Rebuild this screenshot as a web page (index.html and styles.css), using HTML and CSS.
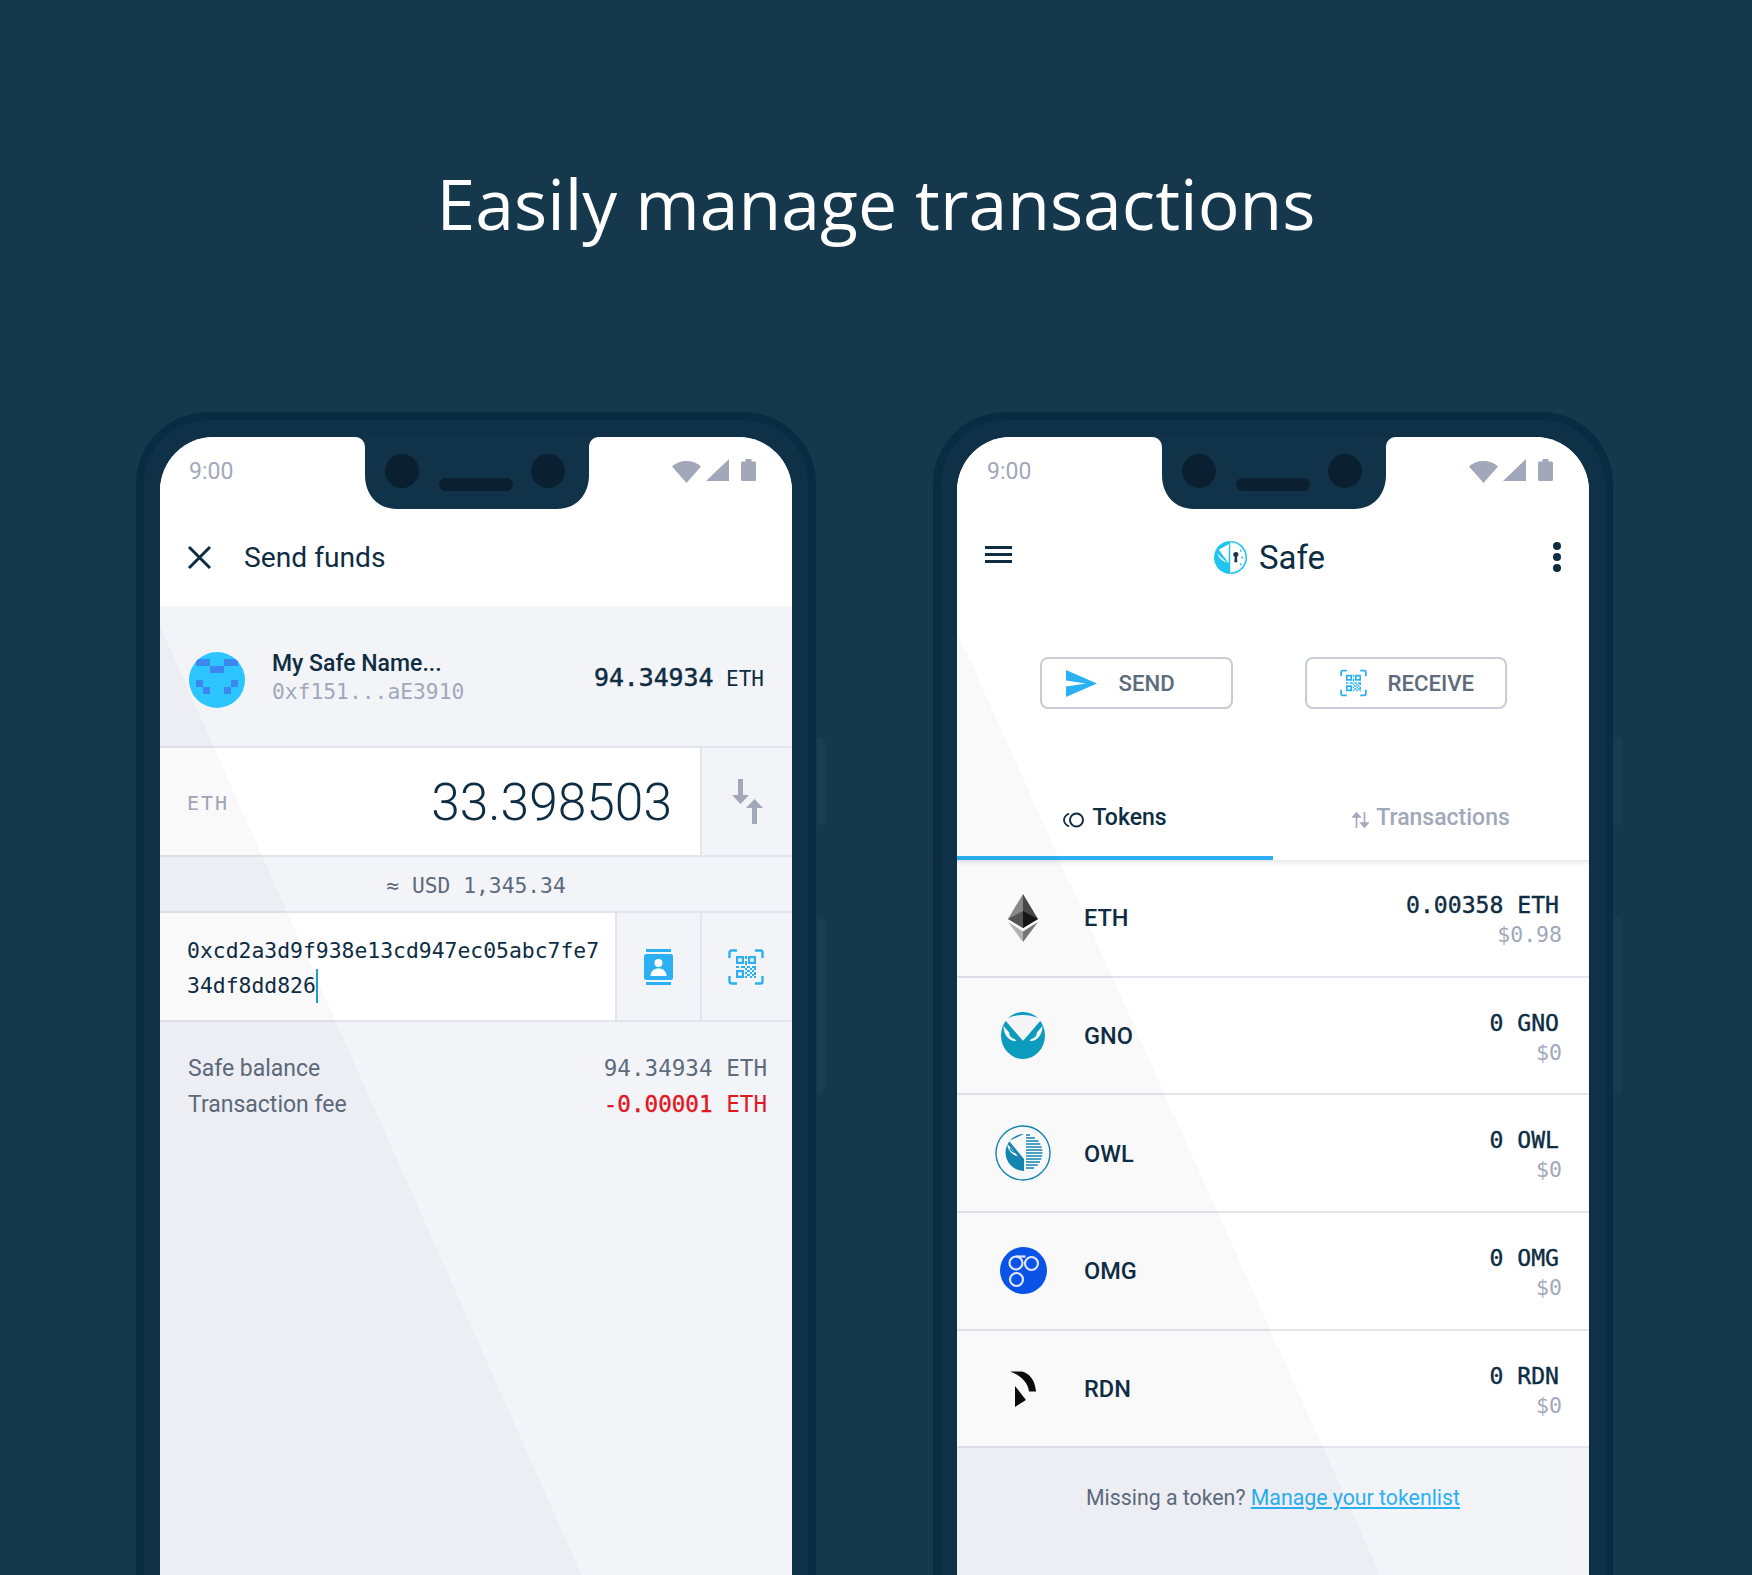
FILE: index.html
```html
<!DOCTYPE html>
<html lang="en">
<head>
    <meta charset="UTF-8">
    <meta name="viewport" content="width=device-width, initial-scale=1.0">
    <title>Easily manage transactions</title>
    <link rel="stylesheet" href="styles.css">
</head>
<body>
    <svg class="defs" width="0" height="0" aria-hidden="true">
        <defs>
            <symbol id="qr" viewBox="0 0 36 36">
                <path d="M1.500 9V3.500a2 2 0 0 1 2-2H9M27 1.500h5.500a2 2 0 0 1 2 2V9M34.500 27v5.500a2 2 0 0 1-2 2H27M9 34.500H3.500a2 2 0 0 1-2-2V27" fill="none" stroke="currentColor" stroke-width="2.400"/>
                <path d="M8 7h8v8H8zM10.200 9.200v3.600h3.600V9.200zM20 7h8v8h-8zM22.200 9.200v3.600h3.600V9.200zM8 21h8v8H8zM10.200 23.200v3.600h3.600v-3.600z" fill="currentColor" fill-rule="evenodd"/>
                <path d="M17 7h2v3h-2zM17 12h2v4h-2zM8 17h3v2H8zM13 17h4v2h-4zM19 17h3v2h-3zM24 17h4v2h-4zM17 19h2v2h-2zM22 19h2v2h-2zM26 19h2v2h-2zM19 21h3v2h-3zM24 21h2v2h-2zM17 23h2v2h-2zM22 23h2v2h-2zM26 23h2v3h-2zM19 25h3v2h-3zM24 25h2v2h-2zM17 27h2v2h-2zM22 27h2v2h-2zM26 27h2v2h-2z" fill="currentColor"/>
            </symbol>
            <symbol id="wifi" viewBox="0 0 29 22">
                <path d="M0 5.500C3.500 2 8.500 0 14.500 0S25.500 2 29 5.500L14.500 22z" fill="currentColor"/>
            </symbol>
            <symbol id="signal" viewBox="0 0 23 22">
                <path d="M23 0v22H0z" fill="currentColor"/>
            </symbol>
            <symbol id="battery" viewBox="0 0 15 22">
                <path d="M4.500 0h6v2.500h3a1.500 1.500 0 0 1 1.500 1.500v16.500a1.500 1.500 0 0 1-1.500 1.500h-12A1.500 1.500 0 0 1 0 20.500V4a1.500 1.500 0 0 1 1.500-1.500h3z" fill="currentColor"/>
            </symbol>
            <symbol id="notch" viewBox="0 0 244 72">
                <path d="M0 0h244c-6 0-10 4-10 11v27c0 20-13 34-32 34H42C23 72 10 58 10 38V11C10 4 6 0 0 0z" fill="currentColor"/>
            </symbol>
        </defs>
    </svg>

    <h1 class="title">Easily manage transactions</h1>

    <div class="phones">
        <!-- send funds -->
        <div class="phone">
            <span class="side-btn side-btn-short"></span>
            <span class="side-btn side-btn-long"></span>
            <div class="screen screen-send">
                <div class="notch">
                    <svg class="notch-shape"><use href="#notch"/></svg>
                    <span class="camera camera-left"></span>
                    <span class="speaker"></span>
                    <span class="camera camera-right"></span>
                </div>
                <div class="status">
                    <span class="clock">9:00</span>
                    <div class="status-icons">
                        <svg class="icon-wifi"><use href="#wifi"/></svg>
                        <svg class="icon-signal"><use href="#signal"/></svg>
                        <svg class="icon-battery"><use href="#battery"/></svg>
                    </div>
                </div>
                <div class="toolbar toolbar-send">
                    <svg class="icon-close" viewBox="0 0 25 25"><path d="M2 2l21 21M23 2L2 23" fill="none" stroke="currentColor" stroke-width="3"/></svg>
                    <span class="toolbar-title">Send funds</span>
                </div>

                <div class="safe-row">
                    <svg class="avatar" viewBox="0 0 56 56">
                        <rect width="56" height="56" fill="#2cc5ff"/>
                        <path d="M7 7h14v7H7zM35 7h14v7H35zM21 14h14v7H21zM7 28h7v7H7zM42 28h7v7h-7zM14 35h7v7h-7zM35 35h7v7h-7z" fill="#3c86f0"/>
                    </svg>
                    <div class="safe-info">
                        <div class="safe-name">My Safe Name...</div>
                        <div class="safe-address">0xf151...aE3910</div>
                    </div>
                    <div class="safe-balance"><strong>94.34934</strong> <span>ETH</span></div>
                </div>

                <div class="amount-row">
                    <div class="amount-field">
                        <span class="amount-unit">ETH</span>
                        <span class="amount-value">33.398503</span>
                    </div>
                    <div class="cell cell-swap">
                        <svg class="icon-swap" viewBox="0 0 31 45"><path d="M0 16l8.500 9 8.500-9zM14 29l8.500-9 8.500 9z" fill="currentColor"/><path d="M8.500 0v18M22.500 45V26" stroke="currentColor" stroke-width="5" fill="none"/></svg>
                    </div>
                </div>

                <div class="fiat-row">≈ USD 1,345.34</div>

                <div class="address-row">
                    <div class="address-field">0xcd2a3d9f938e13cd947ec05abc7fe7<br>34df8dd826<span class="caret"></span></div>
                    <div class="cell cell-contact">
                        <svg class="icon-contact" viewBox="0 0 29 36">
                            <path d="M2 0h25v3H2zM2 33h25v3H2z" fill="#2ab0f3"/>
                            <path d="M2.500 5h24A2.500 2.500 0 0 1 29 7.500v21a2.500 2.500 0 0 1-2.500 2.500h-24A2.500 2.500 0 0 1 0 28.500v-21A2.500 2.500 0 0 1 2.500 5z" fill="#2ab0f3"/>
                            <circle cx="14.500" cy="14" r="4" fill="#fff"/>
                            <path d="M6.500 27c0-5 3.500-7.500 8-7.500s8 2.500 8 7.500z" fill="#fff"/>
                        </svg>
                    </div>
                    <div class="cell cell-qr">
                        <svg class="icon-qr-lg"><use href="#qr"/></svg>
                    </div>
                </div>

                <div class="fees">
                    <div class="fee-row">
                        <span>Safe balance</span>
                        <span class="fee-value">94.34934 <span class="fee-unit">ETH</span></span>
                    </div>
                    <div class="fee-row">
                        <span>Transaction fee</span>
                        <span class="fee-value fee-negative"><strong>-0.00001</strong> <span class="fee-unit">ETH</span></span>
                    </div>
                </div>
            </div>
        </div>

        <!-- token list -->
        <div class="phone">
            <span class="side-btn side-btn-short"></span>
            <span class="side-btn side-btn-long"></span>
            <div class="screen screen-tokens">
                <div class="notch">
                    <svg class="notch-shape"><use href="#notch"/></svg>
                    <span class="camera camera-left"></span>
                    <span class="speaker"></span>
                    <span class="camera camera-right"></span>
                </div>
                <div class="status">
                    <span class="clock">9:00</span>
                    <div class="status-icons">
                        <svg class="icon-wifi"><use href="#wifi"/></svg>
                        <svg class="icon-signal"><use href="#signal"/></svg>
                        <svg class="icon-battery"><use href="#battery"/></svg>
                    </div>
                </div>
                <div class="toolbar toolbar-home">
                    <div class="menu"><span></span><span></span><span></span></div>
                    <div class="brand">
                        <svg class="brand-logo" viewBox="0 0 34 34">
                            <path d="M17 0v34A17 17 0 0 1 17 0z" fill="#1fc4ef"/>
                            <path d="M15.500 3L5 9l10 14z" fill="#fff"/>
                            <path d="M3.500 13c1 4 5 8 10 9.500L3.500 13z" fill="#fff"/>
                            <path d="M6.500 13.500c1 2.500 3 4.500 5.500 5.500" stroke="#1fc4ef" stroke-width="1.400" fill="none"/>
                            <path d="M17 .8a16.200 16.200 0 0 1 0 32.400" fill="#fff" stroke="#1fc4ef" stroke-width="1.600"/>
                            <circle cx="22.500" cy="14" r="2.600" fill="#12344b"/>
                            <path d="M21.500 15h2l.6 7h-3.200z" fill="#12344b"/>
                            <circle cx="29" cy="17" r="1" fill="#1fc4ef"/>
                            <circle cx="27.500" cy="10" r="1" fill="#1fc4ef"/>
                            <circle cx="27.500" cy="24" r="1" fill="#1fc4ef"/>
                        </svg>
                        <span class="brand-name">Safe</span>
                    </div>
                    <div class="more"><span></span><span></span><span></span></div>
                </div>

                <div class="actions">
                    <div class="action action-send">
                        <svg class="icon-send" viewBox="0 0 31 27"><path d="M0 0l31 13.500L0 27V16.500l20-3-20-3z" fill="#2ab0f3"/></svg>
                        <span>SEND</span>
                    </div>
                    <div class="action action-receive">
                        <svg class="icon-qr-sm"><use href="#qr"/></svg>
                        <span>RECEIVE</span>
                    </div>
                </div>

                <div class="tabs">
                    <div class="tab tab-active">
                        <svg class="icon-coins" viewBox="0 0 22 16"><circle cx="13.500" cy="8" r="6.500" fill="none" stroke="currentColor" stroke-width="2"/><path d="M6 1.500C3 3 1 5 1 8s2 5 5 6.500" fill="none" stroke="currentColor" stroke-width="1.800"/></svg>
                        <span>Tokens</span>
                    </div>
                    <div class="tab">
                        <svg class="icon-arrows" viewBox="0 0 17 16"><path d="M4.500 16V4M1 5l3.500-4L8 5zM12.500 0v12M9 11l3.500 4 3.500-4z" fill="currentColor" stroke="currentColor" stroke-width="1.600"/></svg>
                        <span>Transactions</span>
                    </div>
                </div>

                <ul class="tokens">
                    <li class="token">
                        <div class="token-icon">
                            <svg class="logo-eth" viewBox="0 0 30 48">
                                <path d="M15 0L0 25l15 9z" fill="#8a8a8a"/>
                                <path d="M15 0l15 25-15 9z" fill="#4a4a4a"/>
                                <path d="M15 17L0 25l15 9z" fill="#555"/>
                                <path d="M15 17l15 8-15 9z" fill="#161616"/>
                                <path d="M0 28l15 20V37.500z" fill="#b5b5b5"/>
                                <path d="M30 28L15 48V37.500z" fill="#777"/>
                            </svg>
                        </div>
                        <span class="token-name">ETH</span>
                        <div class="token-value"><div class="token-amount">0.00358 ETH</div><div class="token-fiat">$0.98</div></div>
                    </li>
                    <li class="token">
                        <div class="token-icon">
                            <svg class="logo-gno" viewBox="0 0 44 47">
                                <ellipse cx="22" cy="23.500" rx="22" ry="23.500" fill="#0c9fc0"/>
                                <path d="M4 8C9 4.500 15 3 22 3s13 1.500 18 5L22 29z" fill="#fbfbfc"/>
                                <path d="M2.500 14l13 15c-7 1-13-6-13-15zM41.500 14l-13 15c7 1 13-6 13-15z" fill="#fff"/>
                                <path d="M4 10.500L22 30.500l18-20" fill="none" stroke="#0c9fc0" stroke-width="1.500"/>
                                <path d="M8 20.500l6.500 6.500c-3.500 0-6.500-3-6.500-6.500zM36 20.500L29.500 27c3.500 0 6.500-3 6.500-6.500z" fill="#0c9fc0"/>
                            </svg>
                        </div>
                        <span class="token-name">GNO</span>
                        <div class="token-value"><div class="token-amount">0 GNO</div><div class="token-fiat">$0</div></div>
                    </li>
                    <li class="token">
                        <div class="token-icon">
                            <svg class="logo-owl" viewBox="0 0 56 56">
                                <circle cx="28" cy="28" r="27" fill="#fff" stroke="#1487b4" stroke-width="1.400"/>
                                <path d="M29 9v37A18.500 18.500 0 0 1 29 9z" fill="#1487b4"/>
                                <path d="M29 9L14 16l15 18z" fill="#fff"/>
                                <path d="M12.500 21c1 5 5 9 10.500 10.500L12.500 19z" fill="#fff"/>
                                <path d="M15 23.500c1 2 3 3.500 4.500 4" stroke="#1487b4" stroke-width="1.600" fill="none"/>
                                <path d="M31 10h4M31 13h9M31 16h12.500M31 19h14.400M31 22h15.700M31 25h16.300M31 28h16.500M31 31h16.200M31 34h15.300M31 37h14M31 40h11.700M31 43h8" stroke="#1487b4" stroke-width="1.600"/>
                            </svg>
                        </div>
                        <span class="token-name">OWL</span>
                        <div class="token-value"><div class="token-amount">0 OWL</div><div class="token-fiat">$0</div></div>
                    </li>
                    <li class="token">
                        <div class="token-icon">
                            <svg class="logo-omg" viewBox="0 0 47 47">
                                <circle cx="23.500" cy="23.500" r="23.500" fill="#0a55ee"/>
                                <g fill="none" stroke="#e6edfb" stroke-width="2.200">
                                    <circle cx="31.500" cy="16.500" r="6.500"/>
                                    <circle cx="16" cy="16" r="6.500"/>
                                    <circle cx="16.500" cy="32.500" r="6.500"/>
                                    <path d="M16 9.500h9.500"/>
                                </g>
                            </svg>
                        </div>
                        <span class="token-name">OMG</span>
                        <div class="token-value"><div class="token-amount">0 OMG</div><div class="token-fiat">$0</div></div>
                    </li>
                    <li class="token">
                        <div class="token-icon">
                            <svg class="logo-rdn" viewBox="0 0 26 36">
                                <path d="M0 .500h12c8 2 13 9 14 20h-7C18 11 10 4 0 .500z" fill="#0b0b0b"/>
                                <path d="M5 15l11 14-11 7z" fill="#0b0b0b"/>
                            </svg>
                        </div>
                        <span class="token-name">RDN</span>
                        <div class="token-value"><div class="token-amount">0 RDN</div><div class="token-fiat">$0</div></div>
                    </li>
                </ul>

                <p class="tokenlist-note">Missing a token? <a href="#">Manage your tokenlist</a></p>
            </div>
        </div>
    </div>
</body>
</html>
```

FILE: styles.css
```css
* {
    box-sizing: border-box;
}

html, body {
    margin: 0;
    height: 1575px;
    overflow: hidden;
}

body {
    background-color: #16384d;
    font-family: Roboto, Arial, sans-serif;
    color: #0e2d43;
}

.defs {
    display: block;
    height: 0;
}

.title {
    margin: 0;
    height: 412px;
    padding-top: 155px;
    font-family: "Open Sans", sans-serif;
    font-size: 69.700px;
    font-weight: 400;
    line-height: 96px;
    text-align: center;
    color: #ffffff;
}

.phones {
    display: flex;
    gap: 117px;
    padding-left: 136px;
}

.phone {
    position: relative;
    width: 680px;
    padding: 25px 24px 0;
    border-radius: 72px 72px 0 0;
    background-color: #0a2c42;
}

/* lighter band between the outer ring and the screen */
.phone::before {
    content: "";
    position: absolute;
    inset: 8px 8px 0;
    border-radius: 64px 64px 0 0;
    background-color: #0f3148;
}

.side-btn {
    position: absolute;
    right: -9px;
    width: 8px;
    border-radius: 0 3px 3px 0;
    background-color: #1b3d53;
}

.side-btn-short {
    top: 326px;
    height: 87px;
}

.side-btn-long {
    top: 505px;
    height: 176px;
}

.screen {
    position: relative;
    width: 632px;
    height: 1200px;
    overflow: hidden;
    border-radius: 54px 54px 0 0;
    background-color: #f3f4f8;
}

.screen::after {
    content: "";
    position: absolute;
    inset: 0;
    background-color: rgba(20, 40, 80, 0.026);
    pointer-events: none;
}

.screen-send::after {
    clip-path: polygon(0 189px, 449px 1200px, 0 1200px);
}

.screen-tokens::after {
    clip-path: polygon(0 194px, 451px 1200px, 0 1200px);
}

/* notch */
.notch {
    position: absolute;
    top: 0;
    left: 195px;
    width: 244px;
    height: 72px;
    color: #11334a;
}

.notch-shape {
    position: absolute;
    inset: 0;
    width: 244px;
    height: 72px;
}

.camera {
    position: absolute;
    top: 17px;
    width: 34px;
    height: 34px;
    border-radius: 50%;
    background-color: #0a1f30;
}

.camera-left {
    left: 30px;
}

.camera-right {
    left: 176px;
}

.speaker {
    position: absolute;
    top: 41px;
    left: 84px;
    width: 74px;
    height: 13px;
    border-radius: 7px;
    background-color: #0a1f30;
}

/* status bar */
.status {
    display: flex;
    align-items: center;
    justify-content: space-between;
    height: 71px;
    padding: 0 36px 1px 29px;
    background-color: #ffffff;
    color: #a2a8ba;
}

.screen-tokens .status {
    padding-left: 30px;
}

.clock {
    font-size: 23px;
    margin-top: -1px;
}

.status-icons {
    display: flex;
    align-items: flex-end;
    gap: 5px;
    margin-top: -4px;
}

.icon-wifi {
    width: 29px;
    height: 22px;
    margin-bottom: -2px;
}

.icon-signal {
    width: 23px;
    height: 22px;
}

.icon-battery {
    width: 15px;
    height: 22px;
    margin-left: 7px;
}

/* toolbars */
.toolbar {
    display: flex;
    align-items: center;
    height: 98px;
    background-color: #ffffff;
}

.toolbar-send {
    padding-left: 27px;
}

.icon-close {
    width: 25px;
    height: 25px;
    color: #0e2d43;
}

.toolbar-title {
    margin-left: 32px;
    font-size: 28.200px;
}

.toolbar-home {
    justify-content: space-between;
    padding: 0 28px;
}

.menu {
    display: flex;
    flex-direction: column;
    gap: 4px;
    width: 27px;
    margin-top: -5px;
}

.menu span {
    height: 3px;
    background-color: #0e2d43;
}

.brand {
    display: flex;
    align-items: center;
    gap: 12px;
    margin-left: -26px;
}

.brand-logo {
    width: 33px;
    height: 33px;
}

.brand-name {
    font-size: 33px;
}

.more {
    display: flex;
    flex-direction: column;
    gap: 3px;
    width: 8px;
}

.more span {
    height: 8px;
    border-radius: 50%;
    background-color: #0e2d43;
}

/* left screen */
.safe-row {
    display: flex;
    align-items: center;
    height: 142px;
    padding: 2px 28px 0 29px;
    border-bottom: 2px solid #e3e5ec;
}

.avatar {
    width: 56px;
    height: 56px;
    margin-top: 6px;
    border-radius: 50%;
}

.safe-info {
    flex: 1;
    margin-left: 27px;
}

.safe-name {
    font-size: 23px;
    font-weight: 500;
    line-height: 29px;
}

.safe-address {
    font-family: "DejaVu Sans Mono", monospace;
    font-size: 21.300px;
    line-height: 28px;
    color: #a2a8ba;
}

.safe-balance {
    font-family: "DejaVu Sans Mono", monospace;
    font-size: 21px;
    white-space: nowrap;
}

.safe-balance strong {
    font-size: 24.800px;
    font-weight: 400;
    -webkit-text-stroke: 0.5px currentColor;
}

.amount-row {
    display: flex;
    height: 109px;
    border-bottom: 2px solid #e3e5ec;
}

.amount-field {
    flex: 1;
    display: flex;
    align-items: center;
    justify-content: space-between;
    padding: 2px 28px 0 27px;
    background-color: #ffffff;
}

.amount-unit {
    font-family: "DejaVu Sans Mono", monospace;
    font-size: 20px;
    letter-spacing: 2px;
    color: #a2a8ba;
}

.amount-value {
    font-size: 51.500px;
    font-weight: 300;
}

.cell {
    display: flex;
    align-items: center;
    justify-content: center;
    border-left: 2px solid #e3e5ec;
}

.cell-swap {
    width: 92px;
    color: #a2a8ba;
}

.icon-swap {
    width: 31px;
    height: 45px;
}

.fiat-row {
    height: 56px;
    border-bottom: 2px solid #e3e5ec;
    font-family: "DejaVu Sans Mono", monospace;
    font-size: 21.300px;
    line-height: 58px;
    text-align: center;
    color: #5d6b7c;
}

.address-row {
    display: flex;
    height: 109px;
    border-bottom: 2px solid #e3e5ec;
}

.address-field {
    flex: 1;
    padding: 21px 0 0 27px;
    background-color: #ffffff;
    font-family: "DejaVu Sans Mono", monospace;
    font-size: 21.400px;
    line-height: 34.500px;
}

.caret {
    display: inline-block;
    width: 2px;
    height: 34px;
    margin-bottom: -10px;
    background-color: #1f9fd0;
}

.cell-contact {
    width: 85px;
}

.icon-contact {
    width: 29px;
    height: 36px;
}

.cell-qr {
    width: 92px;
    padding-right: 2px;
    color: #2ab0f3;
}

.icon-qr-lg {
    width: 36px;
    height: 36px;
}

.fees {
    padding: 29px 25px 0 28px;
    font-size: 23px;
    color: #5d6b7c;
}

.fee-row {
    display: flex;
    justify-content: space-between;
    line-height: 35.500px;
}

.fee-value {
    font-family: "DejaVu Sans Mono", monospace;
    font-size: 22.600px;
}

.fee-negative {
    color: #e0171f;
}

.fee-negative strong {
    font-weight: 400;
    -webkit-text-stroke: 0.4px currentColor;
}

/* right screen */
.actions {
    display: flex;
    justify-content: center;
    gap: 72px;
    height: 170px;
    padding-top: 51px;
    background-color: #ffffff;
}

.action {
    display: flex;
    align-items: center;
    height: 52px;
    border: 2px solid #c9ccd4;
    border-radius: 8px;
    font-size: 22.200px;
    font-weight: 500;
    color: #5d6b7c;
}

.action-send {
    width: 193px;
    padding-left: 24px;
    gap: 22px;
}

.action-receive {
    width: 202px;
    padding-left: 33px;
    gap: 21px;
}

.icon-send {
    width: 31px;
    height: 27px;
}

.icon-qr-sm {
    width: 27px;
    height: 28px;
    color: #2ab0f3;
}

.tabs {
    display: flex;
    height: 84px;
    background-color: #ffffff;
}

.tab {
    flex: 1;
    display: flex;
    align-items: center;
    justify-content: center;
    gap: 7px;
    padding-top: 2px;
    border-bottom: 4px solid transparent;
    font-size: 23px;
    font-weight: 500;
    color: #a2a8ba;
}

.tab-active {
    border-bottom-color: #2ab0f3;
    color: #0e2d43;
}

.icon-coins {
    width: 22px;
    height: 16px;
    margin-top: 6px;
}

.icon-arrows {
    width: 17px;
    height: 16px;
    margin-top: 6px;
}

.tokens {
    margin: 0;
    padding: 0;
    list-style: none;
}

.token {
    display: flex;
    align-items: center;
    height: 117.700px;
    padding-right: 27px;
    border-bottom: 2px solid #e3e5ec;
    background-color: #ffffff;
}

.token:first-child {
    box-shadow: inset 0 7px 5px -5px rgba(20, 40, 70, 0.14);
}

.token-icon {
    display: flex;
    align-items: center;
    justify-content: center;
    width: 56px;
    margin: 0 33px 0 38px;
}

.token-name {
    flex: 1;
    padding-top: 1px;
    font-size: 23.500px;
    font-weight: 500;
}

.token-value {
    padding-top: 4px;
    text-align: right;
    font-family: "DejaVu Sans Mono", monospace;
}

.token-amount {
    margin-right: 3px;
    font-size: 23.100px;
    line-height: 30px;
    -webkit-text-stroke: 0.4px currentColor;
}

.token-fiat {
    font-size: 21.500px;
    line-height: 30px;
    color: #a2a8ba;
}

.logo-eth {
    width: 30px;
    height: 48px;
}

.logo-gno {
    width: 44px;
    height: 47px;
}

.logo-owl {
    width: 56px;
    height: 56px;
}

.logo-omg {
    width: 47px;
    height: 47px;
}

.logo-rdn {
    width: 26px;
    height: 36px;
}

.tokenlist-note {
    margin: 35px 0 0;
    font-size: 21.300px;
    line-height: 30px;
    text-align: center;
    color: #5d6b7c;
}

.tokenlist-note a {
    color: #2ab0f3;
}
```
